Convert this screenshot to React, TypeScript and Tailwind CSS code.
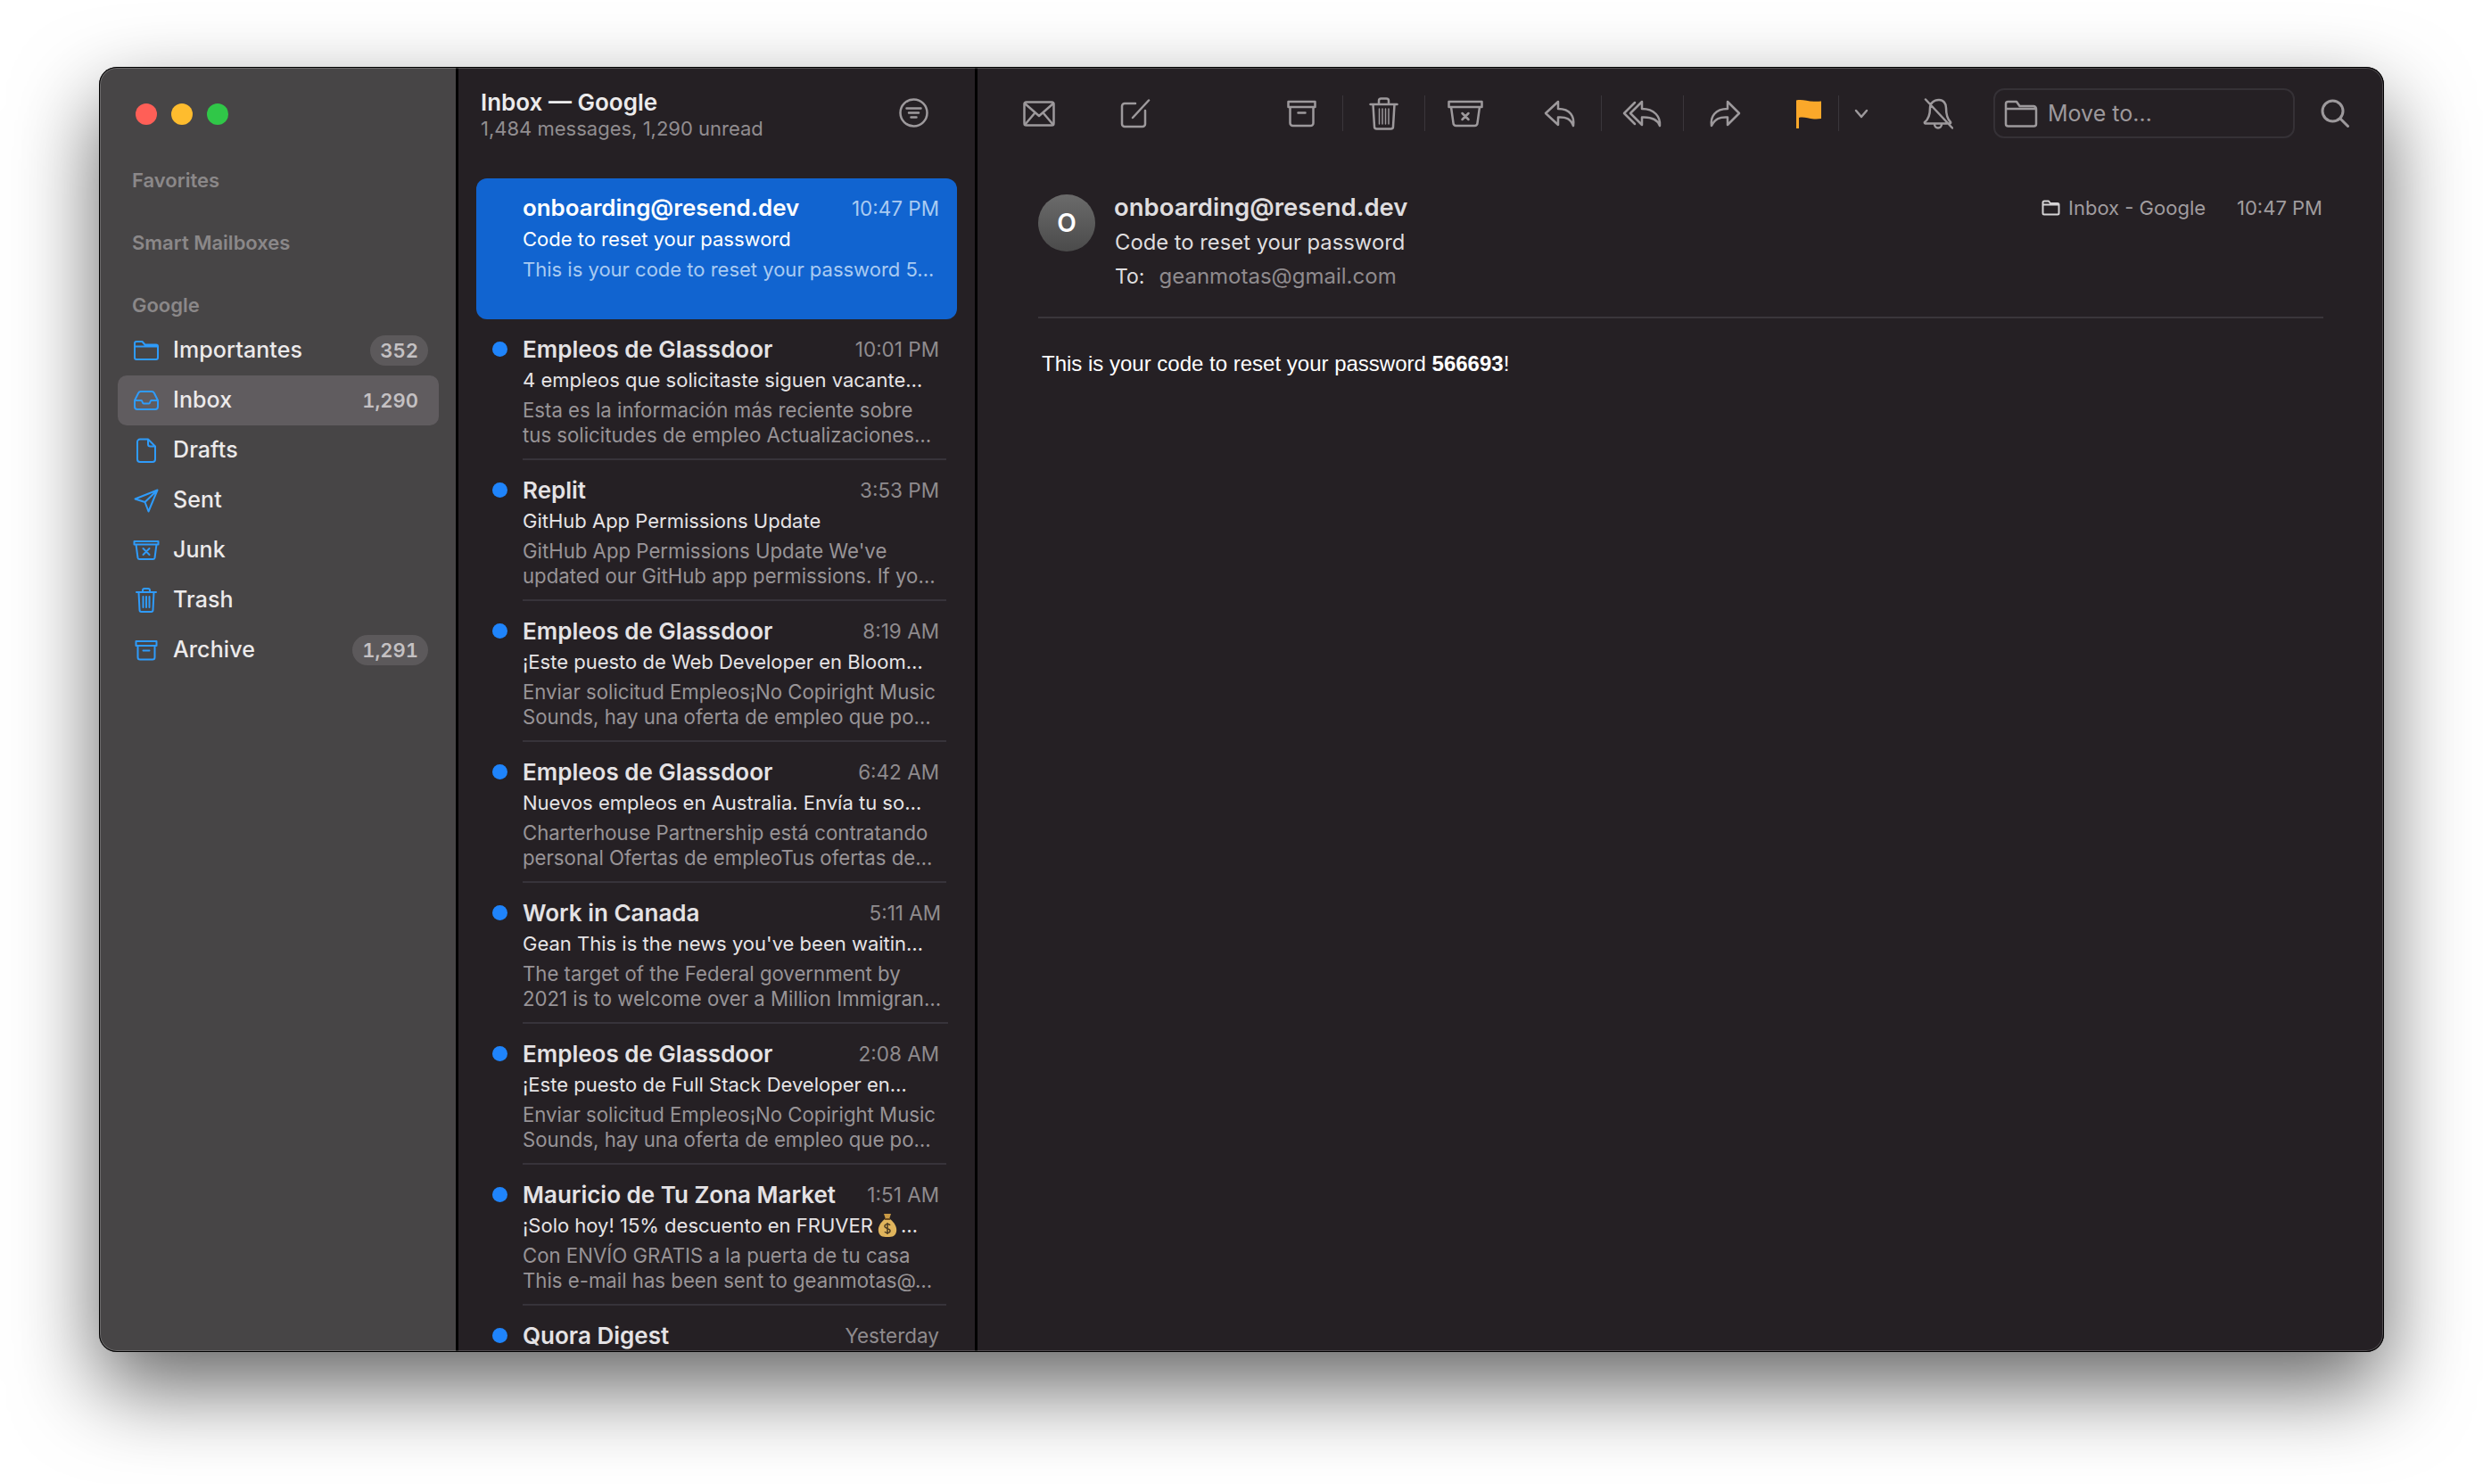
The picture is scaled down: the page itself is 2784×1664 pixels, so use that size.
import React from 'react';

const BLUE = '#2f9bfa';
const GREY = '#9d999c';

type MailboxProps = { label: string; count?: string; selected?: boolean; icon: React.ReactNode };

function Mailbox({ label, count, selected, icon }: MailboxProps) {
    return (
        <div className={`flex h-[56px] items-center rounded-[10px] pl-[17px] pr-[12px] ${selected ? 'bg-[#605c5f]' : ''}`}>
            <div className="flex w-[30px] shrink-0 items-center justify-center">{icon}</div>
            <span className="ml-[15px] flex-1 text-[25px] font-medium tracking-[0.1px] text-[#eceaeb]">{label}</span>
            {count && (
                <span className={`flex h-[34px] items-center rounded-full px-[11px] text-[22px] font-semibold tabular-nums text-[#c4c1c3] ${selected ? '' : 'bg-[#5c595b]'}`}>
                    {count}
                </span>
            )}
        </div>
    );
}

function SectionLabel({ children, className }: { children: string; className: string }) {
    return <div className={`h-[28px] pl-[16px] text-[22px] font-semibold leading-[28px] text-[#8b8889] ${className}`}>{children}</div>;
}

function MoneyBag() {
    return (
        <svg width="22" height="28" viewBox="0 0 22 28" className="ml-[5px] mr-[4px]">
            <path d="M7 1h8l-2 6H9z" fill="#c99a45" />
            <path d="M8 7h6c5 4 8 9 7 14-1 5-4 6-10 6s-9-1-10-6C0 16 3 11 8 7z" fill="#e0b45c" />
            <path d="M8 7h6" stroke="#6e4d1e" strokeWidth="2" />
            <path d="M14 14c-1-2-6-2-6 1 0 3 6 2 6 5 0 3-5 3-6 1M11 11v13" fill="none" stroke="#4a3a22" strokeWidth="1.5" />
        </svg>
    );
}

type Message = {
    sender: string;
    time: string;
    subject?: React.ReactNode;
    preview: string[];
};

const messages: Message[] = [
    {
        sender: 'Empleos de Glassdoor',
        time: '10:01 PM',
        subject: '4 empleos que solicitaste siguen vacante…',
        preview: ['Esta es la información más reciente sobre', 'tus solicitudes de empleo Actualizaciones…'],
    },
    {
        sender: 'Replit',
        time: '3:53 PM',
        subject: 'GitHub App Permissions Update',
        preview: ["GitHub App Permissions Update We've", 'updated our GitHub app permissions. If yo…'],
    },
    {
        sender: 'Empleos de Glassdoor',
        time: '8:19 AM',
        subject: '¡Este puesto de Web Developer en Bloom…',
        preview: ['Enviar solicitud Empleos¡No Copiright Music', 'Sounds, hay una oferta de empleo que po…'],
    },
    {
        sender: 'Empleos de Glassdoor',
        time: '6:42 AM',
        subject: 'Nuevos empleos en Australia. Envía tu so…',
        preview: ['Charterhouse Partnership está contratando', 'personal Ofertas de empleoTus ofertas de…'],
    },
    {
        sender: 'Work in Canada',
        time: '5:11 AM',
        subject: "Gean This is the news you've been waitin…",
        preview: ['The target of the Federal government by', '2021 is to welcome over a Million Immigran…'],
    },
    {
        sender: 'Empleos de Glassdoor',
        time: '2:08 AM',
        subject: '¡Este puesto de Full Stack Developer en…',
        preview: ['Enviar solicitud Empleos¡No Copiright Music', 'Sounds, hay una oferta de empleo que po…'],
    },
    {
        sender: 'Mauricio de Tu Zona Market',
        time: '1:51 AM',
        subject: (
            <>
                ¡Solo hoy! 15% descuento en FRUVER
                <MoneyBag />…
            </>
        ),
        preview: ['Con ENVÍO GRATIS a la puerta de tu casa', 'This e-mail has been sent to geanmotas@…'],
    },
    {
        sender: 'Quora Digest',
        time: 'Yesterday',
        preview: [],
    },
];

function MessageRow({ message }: { message: Message }) {
    return (
        <div className="flex h-[158px] shrink-0 pr-[12px]">
            <div className="flex w-[52px] shrink-0 justify-center pl-[1px] pt-[25px]">
                <div className="h-[17px] w-[17px] rounded-full bg-[#1f84fb]" />
            </div>
            <div className="flex-1 border-b-2 border-[#37333a] pr-[8px] pt-[15px]">
                <div className="flex h-[36px] items-center justify-between">
                    <span className="whitespace-nowrap text-[26px] font-semibold text-[#e4e2e4]">{message.sender}</span>
                    <span className="whitespace-nowrap pt-[2px] text-[22.5px] text-[#8f8b8e]">{message.time}</span>
                </div>
                <div className="-mt-[1px] flex h-[36px] items-center whitespace-nowrap text-[22px] text-[#e6e4e6]">{message.subject}</div>
                <div className="mt-[2px] text-[22.2px] leading-[28px] text-[#989497]">
                    {message.preview.map((line) => (
                        <div key={line} className="whitespace-nowrap">
                            {line}
                        </div>
                    ))}
                </div>
            </div>
        </div>
    );
}

function Icon({ w, h, children, stroke = GREY, sw = 2.5 }: { w: number; h: number; children: React.ReactNode; stroke?: string; sw?: number }) {
    return (
        <svg width={w} height={h} viewBox={`0 0 ${w} ${h}`} fill="none" stroke={stroke} strokeWidth={sw} strokeLinecap="round" strokeLinejoin="round">
            {children}
        </svg>
    );
}

function Separator({ className }: { className: string }) {
    return <div className={`h-[40px] w-px shrink-0 bg-[#3a363b] ${className}`} />;
}

function Tool({ className, children }: { className?: string; children: React.ReactNode }) {
    return <div className={`flex w-[48px] shrink-0 items-center justify-center ${className ?? ''}`}>{children}</div>;
}

export default function App() {
    return (
        <div className="h-[1664px] w-[2784px] overflow-hidden bg-white pl-[111px] pt-[75px] font-['Inter',sans-serif]">
            <div className="relative flex h-[1441px] w-[2562px] overflow-hidden rounded-[20px] bg-[#252024] shadow-[0_40px_95px_rgba(0,0,0,0.6)]">
                {/* sidebar */}
                <div className="w-[400px] shrink-0 bg-[#474546] pl-[21px] pr-[19px]">
                    <div className="flex gap-[16px] pl-[20px] pt-[41px]">
                        <div className="h-[24px] w-[24px] rounded-full bg-[#ff5f57]" />
                        <div className="h-[24px] w-[24px] rounded-full bg-[#febc2e]" />
                        <div className="h-[24px] w-[24px] rounded-full bg-[#30c748]" />
                    </div>
                    <SectionLabel className="mt-[48px]">Favorites</SectionLabel>
                    <SectionLabel className="mt-[42px]">Smart Mailboxes</SectionLabel>
                    <SectionLabel className="mt-[42px]">Google</SectionLabel>
                    <div className="mt-[9px]">
                        <Mailbox
                            label="Importantes"
                            count="352"
                            icon={
                                <Icon w={30} h={24} stroke={BLUE} sw={2}>
                                    <path d="M2 20V4a2 2 0 0 1 2-2h6.5l3 3.5H26a2 2 0 0 1 2 2V20a2 2 0 0 1-2 2H4a2 2 0 0 1-2-2zM2 7.5h26" />
                                </Icon>
                            }
                        />
                        <Mailbox
                            label="Inbox"
                            count="1,290"
                            selected
                            icon={
                                <Icon w={30} h={22} stroke={BLUE} sw={2}>
                                    <path d="M2 11v7a3 3 0 0 0 3 3h20a3 3 0 0 0 3-3v-7l-4-8a3 3 0 0 0-2.5-2h-13A3 3 0 0 0 6 3zM2 11h7.5c1 0 1.2 3.5 2.5 3.5h6c1.3 0 1.5-3.5 2.5-3.5H28" />
                                </Icon>
                            }
                        />
                        <Mailbox
                            label="Drafts"
                            icon={
                                <Icon w={22} h={28} stroke={BLUE} sw={2}>
                                    <path d="M4 1.5h9l8 8V24a3 3 0 0 1-3 3H4a3 3 0 0 1-3-3V4.5a3 3 0 0 1 3-3zM13 1.5V7a2.5 2.5 0 0 0 2.5 2.5H21" />
                                </Icon>
                            }
                        />
                        <Mailbox
                            label="Sent"
                            icon={
                                <Icon w={28} h={27} stroke={BLUE} sw={2}>
                                    <path d="M26.5 1.5 1.5 11.5l11 3.5 4 10.5zM12.5 15 26.5 1.5" />
                                </Icon>
                            }
                        />
                        <Mailbox
                            label="Junk"
                            icon={
                                <Icon w={30} h={24} stroke={BLUE} sw={2}>
                                    <path d="M1.5 2h27v3.5h-27zM3.5 5.5l2 15a2 2 0 0 0 2 1.5h15a2 2 0 0 0 2-1.5l2-15M11.5 10l7 7M18.5 10l-7 7" />
                                </Icon>
                            }
                        />
                        <Mailbox
                            label="Trash"
                            icon={
                                <Icon w={24} h={28} stroke={BLUE} sw={2}>
                                    <path d="M1 5h22M8 5V3a2 2 0 0 1 2-2h4a2 2 0 0 1 2 2v2M3.5 5l1 20a2 2 0 0 0 2 2h11a2 2 0 0 0 2-2l1-20M8.5 10v12M12 10v12M15.5 10v12" />
                                </Icon>
                            }
                        />
                        <Mailbox
                            label="Archive"
                            count="1,291"
                            icon={
                                <Icon w={26} h={24} stroke={BLUE} sw={2}>
                                    <path d="M1.5 2h23v5h-23zM3.5 7v13a2.5 2.5 0 0 0 2.5 2.5h14a2.5 2.5 0 0 0 2.5-2.5V7M9.5 12.5h7" />
                                </Icon>
                            }
                        />
                    </div>
                </div>
                <div className="w-[3px] shrink-0 bg-black" />

                {/* message list */}
                <div className="flex w-[579px] shrink-0 flex-col overflow-hidden bg-[#252024] px-[20px]">
                    <div className="flex h-[125px] shrink-0 justify-between pl-[5px] pr-[32px] pt-[26px]">
                        <div>
                            <div className="text-[26px] font-semibold leading-[28px] text-[#ecebec]">Inbox — Google</div>
                            <div className="text-[22px] leading-[30px] text-[#918d90]">1,484 messages, 1,290 unread</div>
                        </div>
                        <svg width="33" height="33" viewBox="0 0 33 33" fill="none" stroke={GREY} strokeWidth="2.5" strokeLinecap="round" className="mt-[9px]">
                            <circle cx="16.5" cy="16.5" r="15" />
                            <path d="M8.5 11.5h16M11 16.5h11M13.5 21.5h6" />
                        </svg>
                    </div>
                    <div className="flex h-[158px] shrink-0 rounded-[12px] bg-[#1164d0] pl-[52px] pr-[20px] pt-[15px]">
                        <div className="flex-1">
                            <div className="flex h-[36px] items-center justify-between">
                                <span className="text-[25.9px] font-semibold text-white">onboarding@resend.dev</span>
                                <span className="pt-[1px] text-[22.5px] text-[#a9cbf2]">10:47 PM</span>
                            </div>
                            <div className="flex h-[34px] items-center text-[22px] text-white">Code to reset your password</div>
                            <div className="flex h-[34px] items-center whitespace-nowrap text-[22px] text-[#a9cbf2]">This is your code to reset your password 5…</div>
                        </div>
                    </div>
                    {messages.map((message, i) => (
                        <MessageRow key={i} message={message} />
                    ))}
                </div>
                <div className="w-[3px] shrink-0 bg-black" />

                {/* viewer */}
                <div className="flex-1 bg-[#252024]">
                    <div className="flex h-[104px] items-center pl-[45px]">
                        <Tool>
                            <Icon w={36} h={29}>
                                <rect x="1.5" y="1.5" width="33" height="26" rx="2.5" />
                                <path d="M2 3l16 14L34 3M2 27l11-13M34 27 23 14" />
                            </Icon>
                        </Tool>
                        <Tool className="ml-[60px]">
                            <Icon w={34} h={33}>
                                <path d="M17 5H5a3 3 0 0 0-3 3v20a3 3 0 0 0 3 3h20a3 3 0 0 0 3-3V13M14 21 32 1.5" />
                            </Icon>
                        </Tool>
                        <Tool className="ml-[138px]">
                            <Icon w={33} h={31}>
                                <path d="M1.5 2h30v6h-30zM3.5 8v18a3 3 0 0 0 3 3h20a3 3 0 0 0 3-3V8M12.5 14.5h8" />
                            </Icon>
                        </Tool>
                        <Separator className="ml-[22px]" />
                        <Tool className="ml-[21px]">
                            <Icon w={33} h={37}>
                                <path d="M1.5 8h30M11 8V4a2.5 2.5 0 0 1 2.5-2.5h6A2.5 2.5 0 0 1 22 4v4M4.5 8l1.5 25a2.5 2.5 0 0 0 2.5 2.5h16a2.5 2.5 0 0 0 2.5-2.5L28.5 8" />
                                <path d="M11.5 13v17M15 13v17M18.5 13v17M22 13v17" strokeWidth="1.5" />
                            </Icon>
                        </Tool>
                        <Separator className="ml-[22px]" />
                        <Tool className="ml-[21px]">
                            <Icon w={40} h={31}>
                                <path d="M1.5 2h37v6h-37zM4 8l2.5 18a3 3 0 0 0 3 3h21a3 3 0 0 0 3-3L36 8M16.5 15l7 7M23.5 15l-7 7" />
                            </Icon>
                        </Tool>
                        <Tool className="ml-[58px]">
                            <Icon w={37} h={31}>
                                <path d="M16 2 2 15l14 13v-8.5c9-.5 14 1.5 17 9.5 1.5-10-3-19-17-19z" />
                            </Icon>
                        </Tool>
                        <Separator className="ml-[22px]" />
                        <Tool className="ml-[21px]">
                            <Icon w={46} h={31}>
                                <path d="M23 2 10 15l13 13v-8.5c10-.5 17 1.5 20 9.5 1-10-6-19-20-19z" />
                                <path d="M15 3 3 15l12 12" />
                            </Icon>
                        </Tool>
                        <Separator className="ml-[22px]" />
                        <Tool className="ml-[22px]">
                            <Icon w={36} h={31}>
                                <path d="M21 2l13 13-13 13v-8.5C12 19 7 21 3 29 1.5 19 7 10 21 10z" />
                            </Icon>
                        </Tool>
                        <Tool className="ml-[46px]">
                            <svg width="30" height="33" viewBox="0 0 30 33">
                                <path d="M1 1.5c8-2 14 2.5 28 1V22c-12 2-18-3-25-1v12H1z" fill="#fba82a" />
                            </svg>
                        </Tool>
                        <Separator className="ml-[9px]" />
                        <Tool className="ml-px">
                            <Icon w={16} h={11}>
                                <path d="M2 2l6 7 6-7" />
                            </Icon>
                        </Tool>
                        <Tool className="ml-[38px]">
                            <Icon w={34} h={35}>
                                <path d="M8 11c0-5 4-9 10-9 5 0 8 4 8 9 0 7 2 13 5 16a1 1 0 0 1-1 1.5H3a1 1 0 0 1-1-1.5c4-3 6-9 6-16zM13 29c0 6 8 6 8 0M3 1.5 33 33.5" />
                            </Icon>
                        </Tool>
                        <div className="ml-[38px] flex h-[56px] w-[338px] shrink-0 items-center rounded-[12px] border-2 border-[#353136] pl-[10px]">
                            <Icon w={38} h={31}>
                                <path d="M2 27V4.5A2.5 2.5 0 0 1 4.5 2H14l3.5 5H33a3 3 0 0 1 3 3v17a2.5 2.5 0 0 1-2.5 2.5h-29A2.5 2.5 0 0 1 2 27zM2 10h34" />
                            </Icon>
                            <span className="ml-[11px] pt-[1px] text-[25px] text-[#9d999c]">Move to…</span>
                        </div>
                        <Tool className="ml-[21px]">
                            <Icon w={32} h={32} sw={3}>
                                <circle cx="13.5" cy="13.5" r="11.5" />
                                <path d="M22 22l8.5 8.5" />
                            </Icon>
                        </Tool>
                    </div>

                    <div className="mx-[68px]">
                        <div className="flex h-[178px] border-b-2 border-[#3a363b] pt-[36px]">
                            <div className="mt-[3px] flex h-[64px] w-[64px] shrink-0 items-center justify-center rounded-full bg-gradient-to-b from-[#6b6b6b] to-[#4b4b4b] text-[28px] font-semibold text-white">
                                O
                            </div>
                            <div className="ml-[21px] flex-1">
                                <div className="flex h-[36px] items-center text-[27.5px] font-semibold text-[#dfdddf]">onboarding@resend.dev</div>
                                <div className="ml-px mt-[3px] flex h-[36px] items-center text-[23.8px] text-[#dfdddf]">Code to reset your password</div>
                                <div className="ml-px mt-[2px] flex h-[36px] items-center">
                                    <span className="text-[23px] text-[#dfdddf]">To:</span>
                                    <span className="ml-[16px] text-[24px] text-[#8f8b8e]">geanmotas@gmail.com</span>
                                </div>
                            </div>
                            <div className="mr-px flex h-[36px] items-center text-[22px] text-[#a09c9f]">
                                <Icon w={21} h={18} stroke="#d5d3d5" sw={2}>
                                    <path d="M1.5 15V3A1.5 1.5 0 0 1 3 1.5h5l2 2.5h8a1.5 1.5 0 0 1 1.5 1.5V15a1.5 1.5 0 0 1-1.5 1.5H3A1.5 1.5 0 0 1 1.5 15zM1.5 5.5h18" />
                                </Icon>
                                <span className="ml-[9px]">Inbox - Google</span>
                                <span className="ml-[35px]">10:47 PM</span>
                            </div>
                        </div>
                        <div className="ml-[4px] mt-[36px] font-['Liberation_Sans',sans-serif] text-[24px] leading-[30px] text-white">
                            This is your code to reset your password <b>566693</b>!
                        </div>
                    </div>
                </div>

                {/* window edge */}
                <div className="pointer-events-none absolute inset-0 rounded-[20px] border border-black shadow-[inset_0_0_0_1px_rgba(255,255,255,0.2)]" />
            </div>
        </div>
    );
}
